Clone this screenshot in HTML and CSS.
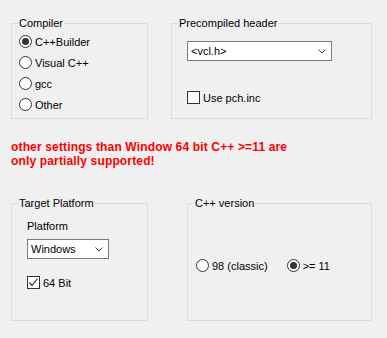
FILE: index.html
```html
<!DOCTYPE html>
<html lang="en">
<head>
    <meta charset="UTF-8">
    <title>Project Options</title>
    <link rel="stylesheet" href="styles.css">
</head>
<body>
    <div class="dialog">
        <div class="row top-row">
            <fieldset class="group compiler">
                <legend>Compiler</legend>
                <label class="opt"><span class="radio checked"></span>C++Builder</label>
                <label class="opt"><span class="radio"></span>Visual C++</label>
                <label class="opt"><span class="radio"></span>gcc</label>
                <label class="opt"><span class="radio"></span>Other</label>
            </fieldset>
            <fieldset class="group pch">
                <legend>Precompiled header</legend>
                <div class="combo pch-combo">
                    <span>&lt;vcl.h&gt;</span>
                    <svg class="chev" width="8" height="5" viewBox="0 0 8 5"><path d="M0.5 0.5 L4 4 L7.5 0.5" fill="none" stroke="#444" stroke-width="1"/></svg>
                </div>
                <label class="opt check-row pch-check"><span class="check"></span>Use pch.inc</label>
            </fieldset>
        </div>

        <p class="warning">other settings than Window 64 bit C++ &gt;=11 are<br>only partially supported!</p>

        <div class="row bottom-row">
            <fieldset class="group target">
                <legend>Target Platform</legend>
                <div class="inner">
                    <div class="caption">Platform</div>
                    <div class="combo platform-combo">
                        <span>Windows</span>
                        <svg class="chev" width="8" height="5" viewBox="0 0 8 5"><path d="M0.5 0.5 L4 4 L7.5 0.5" fill="none" stroke="#444" stroke-width="1"/></svg>
                    </div>
                    <label class="opt check-row bit-check"><span class="check"><svg width="11" height="11" viewBox="0 0 11 11"><path d="M1.5 5.5 L4 8.5 L9.5 1.5" fill="none" stroke="#333" stroke-width="1.2"/></svg></span>64 Bit</label>
                </div>
            </fieldset>
            <fieldset class="group version">
                <legend>C++ version</legend>
                <div class="version-row">
                    <label class="opt"><span class="radio"></span>98 (classic)</label>
                    <label class="opt"><span class="radio checked"></span>&gt;= 11</label>
                </div>
            </fieldset>
        </div>
    </div>
</body>
</html>
```

FILE: styles.css
```css
body {
    margin: 0;
    background-color: #f0f0f0;
    font-family: "Liberation Sans", Arial, sans-serif;
    font-size: 11px;
    color: #000;
}

.dialog {
    padding: 17px 0 0 11px;
}

.row {
    display: flex;
    align-items: flex-start;
}
.top-row {
    gap: 23px;
}
.bottom-row {
    gap: 39px;
}

.group {
    margin: 0;
    padding: 0 0 0 7px;
    border: 1px solid #dcdcdc;
    min-width: 0;
    box-sizing: border-box;
}
.group legend {
    padding: 0 1px;
    margin-left: -1px;
    line-height: 13px;
}

.compiler {
    width: 137px;
    padding-top: 1px;
    padding-bottom: 3px;
}
.pch {
    width: 201px;
    padding-left: 15px;
    padding-bottom: 14px;
}
.pch legend {
    margin-left: -9px;
}
.target {
    width: 137px;
    padding-bottom: 31px;
}
.version {
    width: 185px;
    padding-bottom: 48px;
}

.opt {
    display: flex;
    align-items: center;
    height: 21px;
}
.radio {
    width: 11px;
    height: 11px;
    border: 1px solid #333;
    border-radius: 50%;
    background-color: #fff;
    margin-right: 3px;
    display: flex;
    align-items: center;
    justify-content: center;
}
.radio.checked::after {
    content: "";
    width: 7px;
    height: 7px;
    border-radius: 50%;
    background-color: #333;
}

.check-row {
    height: 13px;
}
.check {
    width: 11px;
    height: 11px;
    border: 1px solid #333;
    background-color: #fff;
    margin-right: 3px;
    display: flex;
    align-items: center;
    justify-content: center;
}

.combo {
    display: flex;
    align-items: center;
    justify-content: space-between;
    height: 20px;
    box-sizing: border-box;
    border: 1px solid #7a7a7a;
    background-color: #fff;
    padding: 0 5px 0 3px;
}
.pch-combo {
    width: 145px;
    margin-top: 11px;
}
.pch-check {
    margin-top: 30px;
}

.warning {
    margin: 21px 0 29px 0;
    color: #ff0000;
    font-weight: bold;
    font-size: 12px;
    letter-spacing: 0.15px;
    line-height: 14px;
}

.inner {
    padding-left: 8px;
}
.caption {
    margin-top: 10px;
    line-height: 13px;
}
.platform-combo {
    width: 82px;
    margin-top: 6px;
}
.bit-check {
    margin-top: 17px;
}

.version-row {
    display: flex;
    gap: 19px;
    margin-top: 49px;
    padding-left: 1px;
}
.version-row .opt {
    height: 13px;
}
```
